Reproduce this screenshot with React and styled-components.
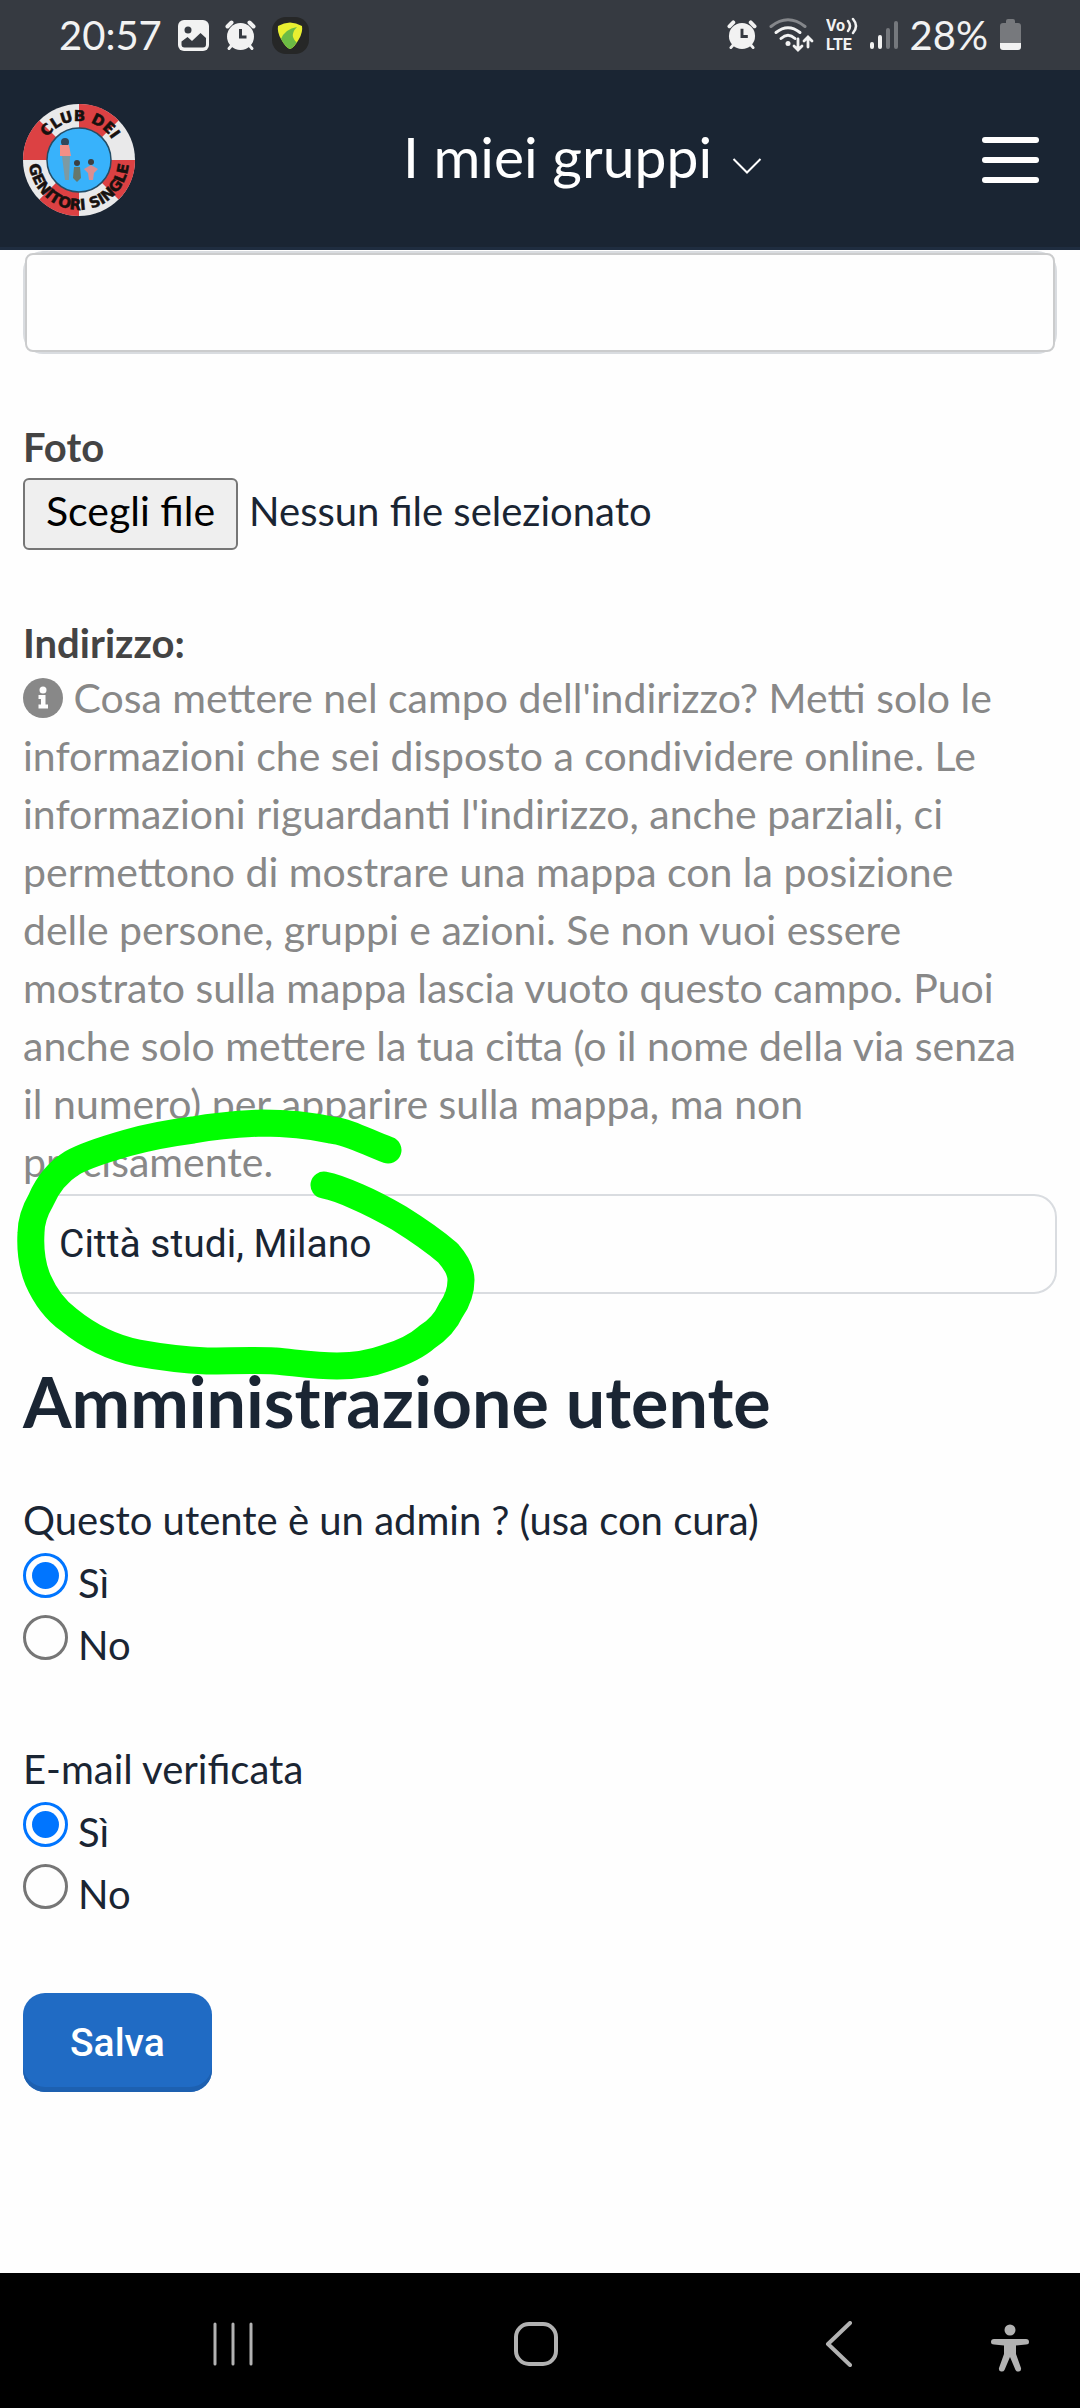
import React, {useState} from 'react';
import styled, {createGlobalStyle} from 'styled-components';

const GlobalStyle = createGlobalStyle`
    * {
        box-sizing: border-box;
    }
    body {
        margin: 0;
        background: #fefefe;
        color: #1a2533;
        font-family: Lato, "Open Sans", sans-serif;
        font-size: 40px;
        line-height: 58px;
    }
`;

const ringSlices = [0, 90, 180, 270];

function Alarm({size}) {
    return (
        <svg width={size} height={size} viewBox="0 0 31 31" aria-hidden="true">
            <g stroke="#f2f2f2" strokeWidth="4" strokeLinecap="round">
                <path d="M2.500 6.500 L6.500 2.500 M24.500 2.500 L28.500 6.500" />
                <path d="M4 28.500 L7 25 M27 28.500 L24 25" strokeWidth="3" />
            </g>
            <circle cx="15.500" cy="16.500" r="13.500" fill="#f2f2f2" />
            <path d="M15.500 9 V17 H21.500" fill="none" stroke="#363a41" strokeWidth="3" />
        </svg>
    )
}

function Picture() {
    return (
        <svg width="31" height="31" viewBox="0 0 31 31" aria-hidden="true">
            <rect width="31" height="31" rx="6" fill="#f2f2f2" />
            <circle cx="10" cy="10" r="3.500" fill="#363a41" />
            <path d="M3.500 21.500 L9.500 17 L14 21 L22.500 13 L28 18 V24.500 Q28 27.500 25 27.500 H6.500 Q3.500 27.500 3.500 24.500 Z" fill="#363a41" />
        </svg>
    )
}

function PickApp() {
    return (
        <svg width="37" height="37" viewBox="0 0 37 37" aria-hidden="true">
            <rect width="37" height="37" rx="14" fill="#262727" />
            <path d="M6 9 Q18 2 30 9 Q31 15 27 22 Q22 31 18 32 Q14 31 9 22 Q5 15 6 9 Z" fill="#e9ef31" />
            <path d="M9 22 Q13 12 25 10 Q20 15 21 20 Q23 25 25 25 Q21 31 18 32 Q14 31 9 22 Z" fill="#6cbb45" />
        </svg>
    )
}

function Wifi() {
    return (
        <svg width="45" height="34" viewBox="0 0 45 34" fill="none" strokeLinecap="round" stroke="#f2f2f2" aria-hidden="true">
            <path d="M2 8.500 Q19 -5 36 8.500" stroke="#85878b" strokeWidth="3" />
            <path d="M7 14.500 Q19 5 31 14.500" strokeWidth="3" />
            <path d="M12 20.500 Q19 14 26 20.500" strokeWidth="3" />
            <circle cx="19" cy="25.500" r="2.500" fill="#f2f2f2" stroke="none" />
            <path d="M29 21 V31 M25 28 L29 32 L33 28 M39 29 V20 M35 23 L39 19 L43 23" strokeWidth="2.800" />
        </svg>
    )
}

function VoLte() {
    return (
        <svg width="32" height="40" viewBox="0 -4 32 40" aria-hidden="true">
            <g fill="#f2f2f2" fontFamily="Roboto, sans-serif" fontWeight="700" fontSize="16">
                <text x="0" y="12">Vo</text>
                <text x="0" y="31">LTE</text>
            </g>
            <path d="M22 2 Q26 7 22 12 M27 0 Q33 7 27 14" fill="none" stroke="#f2f2f2" strokeWidth="2.500" strokeLinecap="round" />
        </svg>
    )
}

function Signal() {
    return (
        <svg width="28" height="31" viewBox="0 0 28 31" fill="none" strokeWidth="4" strokeLinecap="round" aria-hidden="true">
            <path d="M2 24 V27 M10 17 V27" stroke="#f2f2f2" />
            <path d="M18 10 V27 M26 3 V27" stroke="#75787d" />
        </svg>
    )
}

function Battery() {
    return (
        <svg width="21" height="32" viewBox="0 0 21 32" aria-hidden="true">
            <path d="M6 4 V2 Q6 0 8 0 H13 Q15 0 15 2 V4 H18 Q21 4 21 7 V24 H0 V7 Q0 4 3 4 Z" fill="#77797d" />
            <path d="M0 24 H21 V28 Q21 31 18 31 H3 Q0 31 0 28 Z" fill="#f2f2f2" />
        </svg>
    )
}

function ClubLogo() {
    return (
        <svg width="112" height="112" viewBox="-56 -56 112 112" role="img" aria-label="Club dei genitori single">
            <defs>
                <path id="ringTop" d="M -39 0 A 39 39 0 0 1 39 0" />
                <path id="ringBottom" d="M -49 -10 A 50 50 0 1 0 49 -10" />
            </defs>
            <circle r="56" fill="#e9e9ea" />
            {ringSlices.map(a =>
                <path key={a} d="M0 0 V-56 A56 56 0 0 1 39.600 -39.600 Z" fill="#dc4143" transform={`rotate(${a})`} />
            )}
            <circle r="32" fill="#38b2fb" stroke="#234d66" strokeWidth="1.500" />
            <g fontFamily="DejaVu Sans, sans-serif" fontWeight="700" fontSize="15" fill="#17110f" stroke="#17110f" strokeWidth="0.500">
                <text textAnchor="middle"><textPath href="#ringTop" startOffset="51%">CLUB DEI</textPath></text>
                <text textAnchor="middle"><textPath href="#ringBottom" startOffset="50%">GENITORI SINGLE</textPath></text>
            </g>
            <ellipse cx="-14" cy="-18" rx="4" ry="4" fill="#33475a" />
            <path d="M-19 -15 H-10 L-8 -4 H-19 Z" fill="#f48f86" />
            <path d="M-17 -4 H-9 L-10 20 H-14 Z" fill="#7d9aa3" />
            <circle cx="-2" cy="3" r="3" fill="#3c4043" />
            <path d="M-5 7 H1 L2 18 L-2 22 L-6 18 Z" fill="#66786c" />
            <circle cx="12" cy="2" r="3" fill="#3c4043" />
            <path d="M5 9 L12 5 L19 9 L15 13 L14 20 H10 L9 13 Z" fill="#d98f92" />
        </svg>
    )
}

function InfoIcon() {
    return (
        <InfoSvg viewBox="0 0 40 40" aria-hidden="true">
            <circle cx="20" cy="20" r="20" fill="#888" />
            <circle cx="20" cy="12" r="3.500" fill="#fefefe" />
            <path d="M15.500 17 H22.500 V26.500 H25 V30.500 H15.500 V26.500 H18 V21 H15.500 Z" fill="#fefefe" />
        </InfoSvg>
    )
}

function YesNo({name, title}) {
    let [value, setValue] = useState('si');
    const options = [['si', 'Sì'], ['no', 'No']];

    return (
        <Group>
            <legend>{title}</legend>
            {options.map(([id, text]) =>
                <Choice key={id}>
                    <input type="radio" name={name} checked={value === id} onChange={() => setValue(id)} />
                    <span>{text}</span>
                </Choice>
            )}
        </Group>
    )
}

export default function App() {
    let [address, setAddress] = useState('Città studi, Milano');

    return (
        <Page>
            <GlobalStyle />
            <StatusBar>
                <StatusSide $gap="16px">
                    <span>20:57</span>
                    <Picture />
                    <Alarm size={31} />
                    <PickApp />
                </StatusSide>
                <StatusSide $gap="12px">
                    <Alarm size={30} />
                    <Wifi />
                    <VoLte />
                    <Signal />
                    <span>28%</span>
                    <Battery />
                </StatusSide>
            </StatusBar>
            <Header>
                <a href="#home"><ClubLogo /></a>
                <GroupsButton type="button">
                    I miei gruppi
                    <svg width="30" height="18" viewBox="0 0 30 18" fill="none" stroke="#fff" strokeWidth="2" aria-hidden="true">
                        <path d="M1.500 2 L15 15.500 L28.500 2" />
                    </svg>
                </GroupsButton>
                <MenuButton type="button" aria-label="Menu">
                    <i /><i /><i />
                </MenuButton>
            </Header>
            <Form onSubmit={e => e.preventDefault()}>
                <InputFrame>
                    <input type="text" aria-label="Descrizione" />
                </InputFrame>
                <Field>
                    <Label htmlFor="foto">Foto</Label>
                    <FileRow htmlFor="foto">
                        <FileButton>Scegli file</FileButton>
                        <span>Nessun file selezionato</span>
                        <input id="foto" type="file" />
                    </FileRow>
                </Field>
                <Field>
                    <Label htmlFor="indirizzo">Indirizzo:</Label>
                    <Hint>
                        <InfoIcon /> Cosa mettere nel campo dell'indirizzo? Metti solo le
                        informazioni che sei disposto a condividere online. Le
                        informazioni riguardanti l'indirizzo, anche parziali, ci
                        permettono di mostrare una mappa con la posizione
                        delle persone, gruppi e azioni. Se non vuoi essere
                        mostrato sulla mappa lascia vuoto questo campo. Puoi
                        anche solo mettere la tua citta (o il nome della via senza
                        il numero) per apparire sulla mappa, ma non
                        precisamente.
                    </Hint>
                    <AddressBox>
                        <AddressInput id="indirizzo" value={address} onChange={e => setAddress(e.target.value)} />
                        <Marker viewBox="10 1100 480 290" aria-hidden="true">
                            <path d="M388 1150 C368 1143 350 1132 331 1130 C308 1125 285 1123 262 1123 C238 1124 215 1126 193 1130 C170 1133 148 1137 127 1143 C106 1149 86 1155 72 1163 C56 1173 47 1186 41 1200 C34 1212 31 1222 31 1233 C30 1250 33 1268 38 1280 C45 1296 55 1310 69 1320 C90 1337 113 1348 138 1353 C160 1357 184 1360 207 1361 C230 1361 252 1360 275 1361 C297 1363 316 1366 337 1366 C355 1366 370 1364 386 1358 C402 1353 417 1346 427 1337 C438 1330 446 1321 451 1310 C458 1300 461 1290 461 1280 C461 1270 455 1261 448 1253 C433 1240 415 1228 399 1218 C385 1210 372 1203 358 1197 C347 1192 335 1187 324 1185" />
                        </Marker>
                    </AddressBox>
                </Field>
                <Title>Amministrazione utente</Title>
                <YesNo name="admin" title="Questo utente è un admin ? (usa con cura)" />
                <YesNo name="email" title="E-mail verificata" />
                <SaveButton type="submit">Salva</SaveButton>
            </Form>
            <NavBar>
                <button type="button" aria-label="Recenti">
                    <svg width="44" height="44" viewBox="0 0 44 44">
                        <path d="M4 2 V42 M22 2 V42 M40 2 V42" />
                    </svg>
                </button>
                <button type="button" aria-label="Home">
                    <svg width="46" height="46" viewBox="0 0 46 46">
                        <rect x="3" y="3" width="40" height="40" rx="13" strokeWidth="4" />
                    </svg>
                </button>
                <button type="button" aria-label="Indietro">
                    <svg width="44" height="46" viewBox="0 0 44 46">
                        <path d="M33 2 L11 23 L33 44" strokeWidth="4" />
                    </svg>
                </button>
                <AccessButton type="button" aria-label="Accessibilità">
                    <svg width="40" height="48" viewBox="0 0 40 48">
                        <circle cx="20" cy="6" r="5.500" />
                        <path d="M4 15 H36 Q39 15 39 18 Q39 20.500 36 20.500 L26 21.500 V30 L31 44 Q31.500 47 29 47.500 Q26.500 48 25.500 46 L20 33 L14.500 46 Q13.500 48 11 47.500 Q8.500 47 9 44 L14 30 V21.500 L4 20.500 Q1 20.500 1 18 Q1 15 4 15 Z" />
                    </svg>
                </AccessButton>
            </NavBar>
        </Page>
    )
}

const Page = styled.div`
    min-height: 100vh;
    display: flex;
    flex-direction: column;
`;
const StatusBar = styled.div`
    display: flex;
    justify-content: space-between;
    align-items: center;
    height: 70px;
    padding: 0 59px;
    background: #363a41;
    color: #f2f2f2;
`;
const StatusSide = styled.div`
    display: flex;
    align-items: center;
    gap: ${props => props.$gap};
`;
const Header = styled.header`
    display: flex;
    justify-content: space-between;
    align-items: center;
    height: 180px;
    padding: 2px 41px 0 23px;
    background: #1a2533;
    border-bottom: 3px solid #1f2d40;

    a {
        display: flex;
    }
`;
const GroupsButton = styled.button`
    display: flex;
    align-items: center;
    gap: 20px;
    margin-left: 48px;
    padding: 0 0 8px;
    border: 0;
    background: none;
    color: #fff;
    font: inherit;
    font-size: 57px;

    svg {
        margin-top: 20px;
    }
`;
const MenuButton = styled.button`
    display: grid;
    gap: 14px;
    padding: 0;
    border: 0;
    background: none;

    i {
        width: 57px;
        height: 6px;
        border-radius: 3px;
        background: #fff;
    }
`;
const Form = styled.form`
    padding: 1px 23px 60px;
`;
const InputFrame = styled.div`
    padding: 2px;
    border-radius: 20px;
    background: #d9dce0;

    input {
        display: block;
        width: 100%;
        height: 99px;
        padding: 0 34px;
        border: 2px solid #cbcccd;
        border-radius: 8px;
        background: #fefefe;
        font: inherit;
    }
`;
const Field = styled.div`
    margin-top: 64px;
`;
const Label = styled.label`
    display: block;
    color: #444;
    font-weight: 700;
`;
const FileRow = styled.label`
    display: flex;
    align-items: baseline;
    gap: 11px;
    margin-top: 2px;

    input {
        position: absolute;
        opacity: 0;
        width: 1px;
        height: 1px;
    }
`;
const FileButton = styled.span`
    padding: 2px 21px 8px;
    border: 2px solid #767676;
    border-radius: 6px;
    background: #efefef;
    color: #000;
    font-size: 41px;
`;
const Hint = styled.p`
    margin: -3px 0 3px;
    padding-right: 16px;
    color: #888;
    font-size: 41px;
`;
const InfoSvg = styled.svg`
    width: 40px;
    height: 40px;
    vertical-align: -5px;
`;
const AddressBox = styled.div`
    position: relative;
`;
const AddressInput = styled.input`
    display: block;
    width: 100%;
    height: 100px;
    padding: 0 34px;
    border: 2px solid #d9dce0;
    border-radius: 23px;
    background: #fefefe;
    color: #1a2533;
    font-family: Roboto, sans-serif;
    font-size: 39px;
`;
const Marker = styled.svg`
    position: absolute;
    left: -13px;
    top: -94px;
    width: 480px;
    height: 290px;
    pointer-events: none;
    fill: none;
    stroke: #00ff00;
    stroke-width: 27px;
    stroke-linecap: round;
    stroke-linejoin: round;
`;
const Title = styled.h2`
    margin: 67px 0 50px;
    font-size: 70px;
    line-height: 80px;
    font-weight: 700;
`;
const Group = styled.fieldset`
    margin: 0 0 67px;
    padding: 0;
    border: 0;

    legend {
        padding: 0;
    }
`;
const Choice = styled.label`
    display: flex;
    align-items: flex-start;
    gap: 10px;
    height: 62px;

    input {
        appearance: none;
        flex: none;
        width: 45px;
        height: 45px;
        margin: 4px 0 0;
        padding: 6px;
        border: 3px solid #767676;
        border-radius: 50%;
    }
    input:checked {
        border-color: #0075ff;
        background: #0075ff content-box;
    }
    span {
        margin-top: 5px;
    }
`;
const SaveButton = styled.button`
    height: 99px;
    margin-top: 4px;
    padding: 0 47px;
    border: 0;
    border-radius: 22px;
    background: #206bc4;
    box-shadow: inset 0 -5px 0 #1d60b0;
    color: #fff;
    font-family: Roboto, sans-serif;
    font-size: 39px;
    font-weight: 500;
`;
const NavBar = styled.nav`
    position: relative;
    display: flex;
    justify-content: space-around;
    align-items: center;
    height: 135px;
    margin-top: auto;
    padding: 6px 90px 0 82px;
    background: #000;

    button {
        display: flex;
        justify-content: center;
        width: 50px;
        padding: 0;
        border: 0;
        background: none;
    }
    svg {
        fill: none;
        stroke: #b2b2b2;
        stroke-width: 3px;
        stroke-linecap: round;
        stroke-linejoin: round;
    }
`;
const AccessButton = styled.button`
    position: absolute;
    right: 45px;
    top: 51px;

    svg {
        fill: #b2b2b2;
        stroke: none;
    }
`;
